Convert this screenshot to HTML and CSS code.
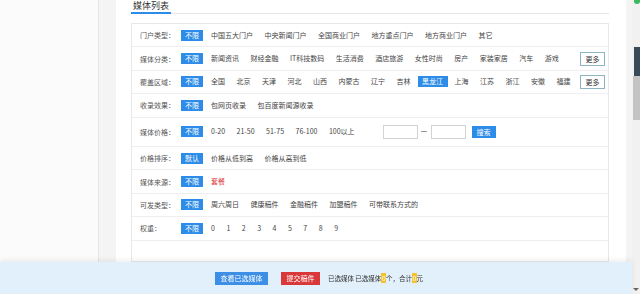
FILE: index.html
```html
<!DOCTYPE html>
<html lang="zh-CN">
  <head>
    <meta charset="UTF-8" />
    <meta name="viewport" content="width=device-width, initial-scale=1.0" />
    <title>媒体列表</title>
    <link rel="stylesheet" href="styles.css">
  </head>
  <body>
    <div class="page">
      <div class="side"></div>
      <div class="main">
        <div class="card">
          <div class="card-head">
            <h2 class="card-title">媒体列表</h2>
          </div>

          <div class="filter">
            <div class="filter-row">
              <span class="filter-label">门户类型：</span>
              <div class="filter-opts">
                <span class="tag">不限</span>
                <span class="opt">中国五大门户</span>
                <span class="opt">中央新闻门户</span>
                <span class="opt">全国商业门户</span>
                <span class="opt">地方重点门户</span>
                <span class="opt">地方商业门户</span>
                <span class="opt">其它</span>
              </div>
            </div>
            <div class="filter-row">
              <span class="filter-label">媒体分类：</span>
              <div class="filter-opts">
                <span class="tag">不限</span>
                <span class="opt">新闻资讯</span>
                <span class="opt">财经金融</span>
                <span class="opt">IT科技数码</span>
                <span class="opt">生活消费</span>
                <span class="opt">酒店旅游</span>
                <span class="opt">女性时尚</span>
                <span class="opt">房产</span>
                <span class="opt">家装家居</span>
                <span class="opt">汽车</span>
                <span class="opt">游戏</span>
                <span class="more">更多</span>
              </div>
            </div>
            <div class="filter-row">
              <span class="filter-label">覆盖区域：</span>
              <div class="filter-opts">
                <span class="tag">不限</span>
                <span class="opt">全国</span>
                <span class="opt">北京</span>
                <span class="opt">天津</span>
                <span class="opt">河北</span>
                <span class="opt">山西</span>
                <span class="opt">内蒙古</span>
                <span class="opt">辽宁</span>
                <span class="opt">吉林</span>
                <span class="opt opt-on">黑龙江</span>
                <span class="opt">上海</span>
                <span class="opt">江苏</span>
                <span class="opt">浙江</span>
                <span class="opt">安徽</span>
                <span class="opt">福建</span>
                <span class="more">更多</span>
              </div>
            </div>
            <div class="filter-row">
              <span class="filter-label">收录效果：</span>
              <div class="filter-opts">
                <span class="tag">不限</span>
                <span class="opt">包网页收录</span>
                <span class="opt">包百度新闻源收录</span>
              </div>
            </div>
            <div class="filter-row price-row">
              <span class="filter-label">媒体价格：</span>
              <div class="filter-opts">
                <span class="tag">不限</span>
                <span class="opt">0-20</span>
                <span class="opt">21-50</span>
                <span class="opt">51-75</span>
                <span class="opt">76-100</span>
                <span class="opt">100以上</span>
                <div class="range">
                  <input type="text" class="range-input" />
                  <span class="range-dash"></span>
                  <input type="text" class="range-input" />
                  <span class="search">搜索</span>
                </div>
              </div>
            </div>
            <div class="filter-row">
              <span class="filter-label">价格排序：</span>
              <div class="filter-opts">
                <span class="tag">默认</span>
                <span class="opt">价格从低到高</span>
                <span class="opt">价格从高到低</span>
              </div>
            </div>
            <div class="filter-row">
              <span class="filter-label">媒体来源：</span>
              <div class="filter-opts">
                <span class="tag">不限</span>
                <span class="opt opt-red">套餐</span>
              </div>
            </div>
            <div class="filter-row">
              <span class="filter-label">可发类型：</span>
              <div class="filter-opts">
                <span class="tag">不限</span>
                <span class="opt">周六周日</span>
                <span class="opt">健康稿件</span>
                <span class="opt">金融稿件</span>
                <span class="opt">加盟稿件</span>
                <span class="opt">可带联系方式的</span>
              </div>
            </div>
            <div class="filter-row">
              <span class="filter-label">权重：</span>
              <div class="filter-opts">
                <span class="tag">不限</span>
                <span class="opt">0</span>
                <span class="opt">1</span>
                <span class="opt">2</span>
                <span class="opt">3</span>
                <span class="opt">4</span>
                <span class="opt">5</span>
                <span class="opt">7</span>
                <span class="opt">8</span>
                <span class="opt">9</span>
              </div>
            </div>
          </div>
        </div>
      </div>
      <div class="scrollbar">
        <span class="sb-dot"></span>
        <span class="sb-dark"></span>
        <span class="sb-thumb"></span>
        <span class="sb-arrow"></span>
      </div>
    </div>

    <!-- bottom bar stays over the list -->
    <div class="footer-bar">
      <span class="btn btn-blue">查看已选媒体</span>
      <span class="btn btn-red">提交稿件</span>
      <span class="footer-text">已选媒体 已选媒体<span class="num">0</span>个，合计<span class="num">0</span>元</span>
    </div>
  </body>
</html>
```

FILE: styles.css
```css
* {
  box-sizing: border-box;
  margin: 0;
  padding: 0;
}

body {
  font-family: "Noto Sans CJK SC", "Noto Sans", sans-serif;
  font-size: 7px;
  color: #444;
  background-color: #fbfbfb;
  height: 294px;
  overflow: hidden;
}
.page {
  display: flex;
  height: 294px;
}
.side {
  width: 99px;
  flex: none;
  border-right: 1px solid #e6e6e6;
}
.main {
  flex: 1;
  display: flex;
  background: #f4f4f4;
  padding: 0 6px 0 17px;
}
.card {
  flex: 1;
  background: #fff;
  padding: 0 17px 0 15px;
}
.card-head {
  display: flex;
  align-items: flex-end;
  height: 14px;
  border-bottom: 1px solid #e6e6e6;
}
.card-title {
  font-size: 9px;
  font-weight: normal;
  line-height: 12px;
  color: #333;
  padding: 0 2px;
  border-bottom: 2px solid #2d8ce8;
  margin-bottom: -1px;
}
.filter {
  margin-top: 9px;
  border: 1px solid #e8e8e8;
  padding-bottom: 20px;
}
.filter-row {
  display: flex;
  align-items: center;
  min-height: 23.4px;
  border-bottom: 1px solid #eee;
  padding: 0 3px 0 8px;
}
.price-row {
  min-height: 29.4px;
}
.filter-label {
  width: 41px;
  flex: none;
  color: #555;
}
.filter-opts {
  flex: 1;
  display: flex;
  align-items: center;
  gap: 2.5px;
}
.tag {
  width: 22px;
  height: 11px;
  line-height: 11px;
  text-align: center;
  background: #2d8ce8;
  color: #fff;
  margin-right: 1px;
}
.opt {
  padding: 0 4.5px;
  line-height: 11px;
  white-space: nowrap;
}
.opt-on {
  background: #2d8ce8;
  color: #fff;
}
.opt-red {
  color: #e0383e;
}
.more {
  margin-left: auto;
  width: 25px;
  height: 14px;
  line-height: 12px;
  text-align: center;
  border: 1px solid #8db4c2;
  color: #333;
}
.range {
  display: flex;
  align-items: center;
  margin-left: 21px;
}
.range-input {
  width: 35px;
  height: 14px;
  border: 1px solid #d6d2cf;
  background: #fff;
}
.range-dash {
  width: 6px;
  height: 1px;
  background: #999;
  margin: 0 3.5px;
}
.search {
  width: 24px;
  height: 12px;
  line-height: 12px;
  margin-left: 6px;
  text-align: center;
  background: #2d8ce8;
  color: #fff;
}

.scrollbar {
  width: 8px;
  flex: none;
  display: flex;
  flex-direction: column;
  align-items: flex-end;
  background: #f1f1f1;
}
.sb-dot {
  width: 6px;
  height: 4px;
  border-radius: 0 0 3px 3px;
  background: #3cb85c;
}
.sb-dark {
  width: 6px;
  height: 29px;
  margin-top: 43px;
  background: #3a4956;
}
.sb-thumb {
  width: 7px;
  height: 44px;
  background: #c4c4c4;
}
.sb-arrow {
  margin-top: auto;
  margin-bottom: 3px;
  margin-right: 1px;
  border-left: 3px solid transparent;
  border-right: 3px solid transparent;
  border-top: 3px solid #666;
}

.footer-bar {
  position: fixed;
  left: 0;
  right: 8px;
  bottom: 0;
  height: 32px;
  display: flex;
  align-items: center;
  justify-content: center;
  padding-left: 6px;
  background: #e2f0fb;
  box-shadow: 0 -2px 5px rgba(0, 0, 0, 0.07);
}
.btn {
  height: 13px;
  line-height: 13px;
  padding: 0 5.5px;
  color: #fff;
}
.btn-blue {
  background: #3d8fe6;
  margin-right: 13px;
}
.btn-red {
  background: #d9383a;
  margin-right: 8px;
}
.footer-text {
  font-size: 6.5px;
  color: #333;
}
.num {
  background: #f5c22e;
  color: #fff;
  padding: 0 0.5px;
}
```
